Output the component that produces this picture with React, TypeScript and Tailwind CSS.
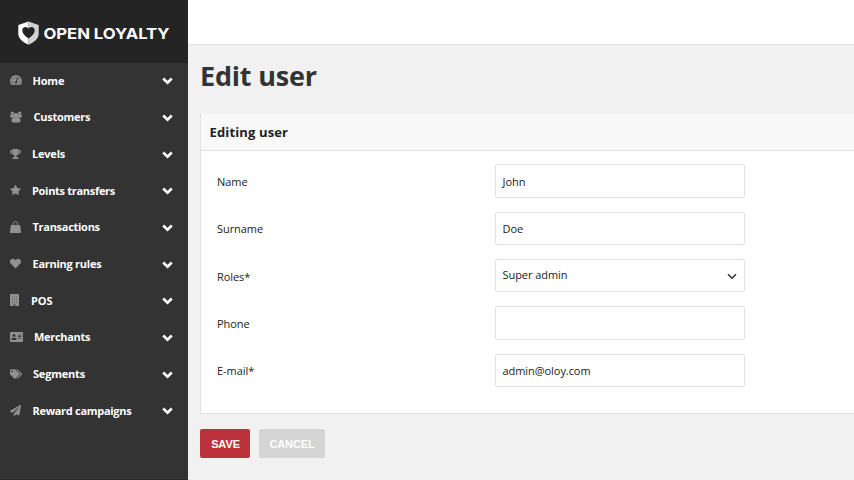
import type { ReactNode } from "react";
import {
  FaTachometerAlt,
  FaTrophy,
  FaStar,
  FaHeart,
  FaAddressCard,
  FaTags,
  FaPaperPlane,
} from "react-icons/fa";

function UsersIcon() {
  return (
    <svg viewBox="0 0 12 12" className="h-[12px] w-[12px]" fill="currentColor">
      <circle cx="2.3" cy="2.1" r="1.7" />
      <circle cx="9.7" cy="2.1" r="1.7" />
      <path d="M0 5.5 C0 4 0.5 3.4 1.2 3.5 H4 V6.5 H1 C0.4 6.5 0 6.2 0 5.5 Z M12 5.5 C12 4 11.5 3.4 10.8 3.5 H8 V6.5 H11 C11.6 6.5 12 6.2 12 5.5 Z" />
      <circle cx="6" cy="4.4" r="2.5" />
      <path d="M1.6 10 C1.6 7.4 2.4 6.4 3.8 6.3 C5 7.3 7 7.3 8.2 6.3 C9.6 6.4 10.4 7.4 10.4 10 C10.4 11.1 9.7 11.6 8.8 11.6 H3.2 C2.3 11.6 1.6 11.1 1.6 10 Z" />
    </svg>
  );
}

function BagIcon() {
  return (
    <svg viewBox="0 0 11 12" className="h-[12px] w-[11px]" fill="currentColor">
      <path d="M0.9 4 H10.1 L11 11 C11 11.6 10.7 12 10.2 12 H0.8 C0.3 12 0 11.6 0 11 Z" />
      <path d="M3.2 5.2 V3 C3.2 1.5 4.2 0.6 5.5 0.6 C6.8 0.6 7.8 1.5 7.8 3 V5.2" fill="none" stroke="currentColor" />
    </svg>
  );
}

function BuildingIcon() {
  return (
    <svg viewBox="0 0 9 12" className="h-[12px] w-[9px]">
      <rect width="9" height="12" rx="0.5" fill="currentColor" />
      <path
        d="M2 2.5 H7 M2 4.5 H7 M2 6.5 H7 M2 8.5 H7"
        stroke="#333333"
        strokeOpacity="0.5"
        strokeWidth="0.9"
        strokeDasharray="1 1"
      />
      <rect x="3.5" y="10" width="2" height="2" fill="#333333" fillOpacity="0.6" />
    </svg>
  );
}

function Shield() {
  return (
    <svg viewBox="0 0 21 24" className="h-6 w-[21px] shrink-0">
      <path d="M10.5 0.4 L0.3 4 V12.5 C0.3 18 5 21.3 10.5 23.8 Z" fill="#ffffff" />
      <path d="M10.5 0.4 L20.7 4 V12.5 C20.7 18 16 21.3 10.5 23.8 Z" fill="#d2d2d2" />
      <path
        d="M10.5 17.6 C6.6 14.6 4.3 12.3 4.3 9.4 C4.3 7.2 5.7 5.9 7.5 5.9 C8.8 5.9 9.9 6.6 10.5 7.7 C11.1 6.6 12.2 5.9 13.5 5.9 C15.3 5.9 16.7 7.2 16.7 9.4 C16.7 12.3 14.4 14.6 10.5 17.6 Z"
        fill="#242424"
      />
    </svg>
  );
}

const menu: { label: string; icon: ReactNode; gap: string }[] = [
  { label: "Home", icon: <FaTachometerAlt className="h-[12px] w-[12px]" />, gap: "pl-[10.5px] tracking-[-0.2px]" },
  { label: "Customers", icon: <UsersIcon />, gap: "pl-[11.5px] tracking-[-0.25px]" },
  { label: "Levels", icon: <FaTrophy className="h-[10px] w-[11px]" />, gap: "pl-[11px] tracking-[-0.2px]" },
  { label: "Points transfers", icon: <FaStar className="h-[12px] w-[11px]" />, gap: "pl-[11px] tracking-[-0.3px]" },
  { label: "Transactions", icon: <BagIcon />, gap: "pl-[11.5px] tracking-[-0.28px]" },
  { label: "Earning rules", icon: <FaHeart className="h-[11px] w-[11px]" />, gap: "pl-[11.5px] tracking-[-0.26px]" },
  { label: "POS", icon: <BuildingIcon />, gap: "pl-[12px] tracking-[-0.1px]" },
  { label: "Merchants", icon: <FaAddressCard className="h-[12px] w-[13px]" />, gap: "pl-[11px] tracking-[-0.3px]" },
  { label: "Segments", icon: <FaTags className="h-[12px] w-[12px]" />, gap: "pl-[11px] tracking-[-0.2px]" },
  { label: "Reward campaigns", icon: <FaPaperPlane className="h-[11px] w-[11px]" />, gap: "pl-[11.5px] tracking-[-0.3px]" },
];

function Sidebar() {
  return (
    <aside className="flex h-full w-[188px] shrink-0 flex-col border-b border-[#2a2a2a] bg-[#333333]">
      <div className="flex h-[63px] shrink-0 items-center bg-[#242424] pt-[3px] pl-[18px]">
        <Shield />
        <svg className="ml-1 h-5 w-[130px]" viewBox="0 0 130 20">
          <text
            x="0.5"
            y="15.5"
            textLength="126"
            lengthAdjust="spacingAndGlyphs"
            className="fill-white font-['Inter',sans-serif] text-[15px] font-bold"
          >
            OPEN LOYALTY
          </text>
        </svg>
      </div>
      <nav className="flex flex-col">
        {menu.map((item) => (
          <div key={item.label} className="flex h-[36.67px] items-center pr-[15px] pl-[10px]">
            <span className="-mt-[2px] text-[#919191]">{item.icon}</span>
            <span className={`-mt-[0.5px] grow text-[11px] font-bold whitespace-nowrap text-white ${item.gap}`}>
              {item.label}
            </span>
            <svg viewBox="0 0 11 8" className="h-2 w-[11px]" fill="none" stroke="#ffffff" strokeWidth="2.6">
              <path d="M1.2 1.5 L5.5 5.6 L9.8 1.5" />
            </svg>
          </div>
        ))}
      </nav>
    </aside>
  );
}

function Field({ label, value, box, select }: { label: string; value: string; box: string; select?: boolean }) {
  return (
    <div className="flex h-[47.25px] items-start">
      <div className="w-[278px] pt-[10px] leading-4">{label}</div>
      <div
        className={`flex w-[250px] items-center justify-between rounded-[2px] border border-[#e2e2e2] bg-white pr-[7px] pl-[6.5px] ${box}`}
      >
        <span>{value}</span>
        {select && (
          <svg viewBox="0 0 10 7" className="mt-[2px] h-[7px] w-[10px]" fill="none" stroke="#333333" strokeWidth="1.6">
            <path d="M1 1.2 L5 5.2 L9 1.2" />
          </svg>
        )}
      </div>
    </div>
  );
}

export default function App() {
  return (
    <div className="flex h-[480px] w-[854px] overflow-hidden bg-[#f1f1f1] font-['Open_Sans',sans-serif] text-[11px] tracking-[-0.06px] text-[#222222]">
      <Sidebar />
      <main className="flex min-w-0 grow flex-col">
        <header className="h-[45px] shrink-0 border-b border-[#e2e2e2] bg-white" />
        <div className="flex flex-col pl-[12px]">
          <h1 className="flex h-[69px] items-center pb-[7px] text-[27px] font-bold tracking-[-0.2px] text-[#333333]">
            Edit user
          </h1>
          <section className="h-[300px] border-b border-l border-[#e2e2e2] bg-white">
            <h2 className="flex h-[37px] items-center border-b border-[#e2e2e2] bg-[#f9f9f9] pt-px pl-[8.5px] text-[13px] font-bold tracking-[0.14px]">
              Editing user
            </h2>
            <div className="flex flex-col pt-[13px] pl-[16px]">
              <Field label="Name" value="John" box="h-[34px] pt-[2px]" />
              <Field label="Surname" value="Doe" box="mt-[0.75px] h-[33px] pt-[2px]" />
              <Field label="Roles*" value="Super admin" box="h-[33px]" select />
              <Field label="Phone" value="" box="h-[34px]" />
              <Field label="E-mail*" value="admin@oloy.com" box="mt-[1px] h-[33px] pt-[2px]" />
            </div>
          </section>
          <div className="flex gap-[9px] pt-[15px] font-['Liberation_Sans',sans-serif] text-[11px] font-bold tracking-[-0.1px] text-white">
            <button className="h-[29px] w-[50px] rounded-[2px] bg-[#bb323b] pt-px pl-px">SAVE</button>
            <button className="h-[29px] w-[66px] rounded-[2px] bg-[#d4d4d4] pt-px">CANCEL</button>
          </div>
        </div>
      </main>
    </div>
  );
}
